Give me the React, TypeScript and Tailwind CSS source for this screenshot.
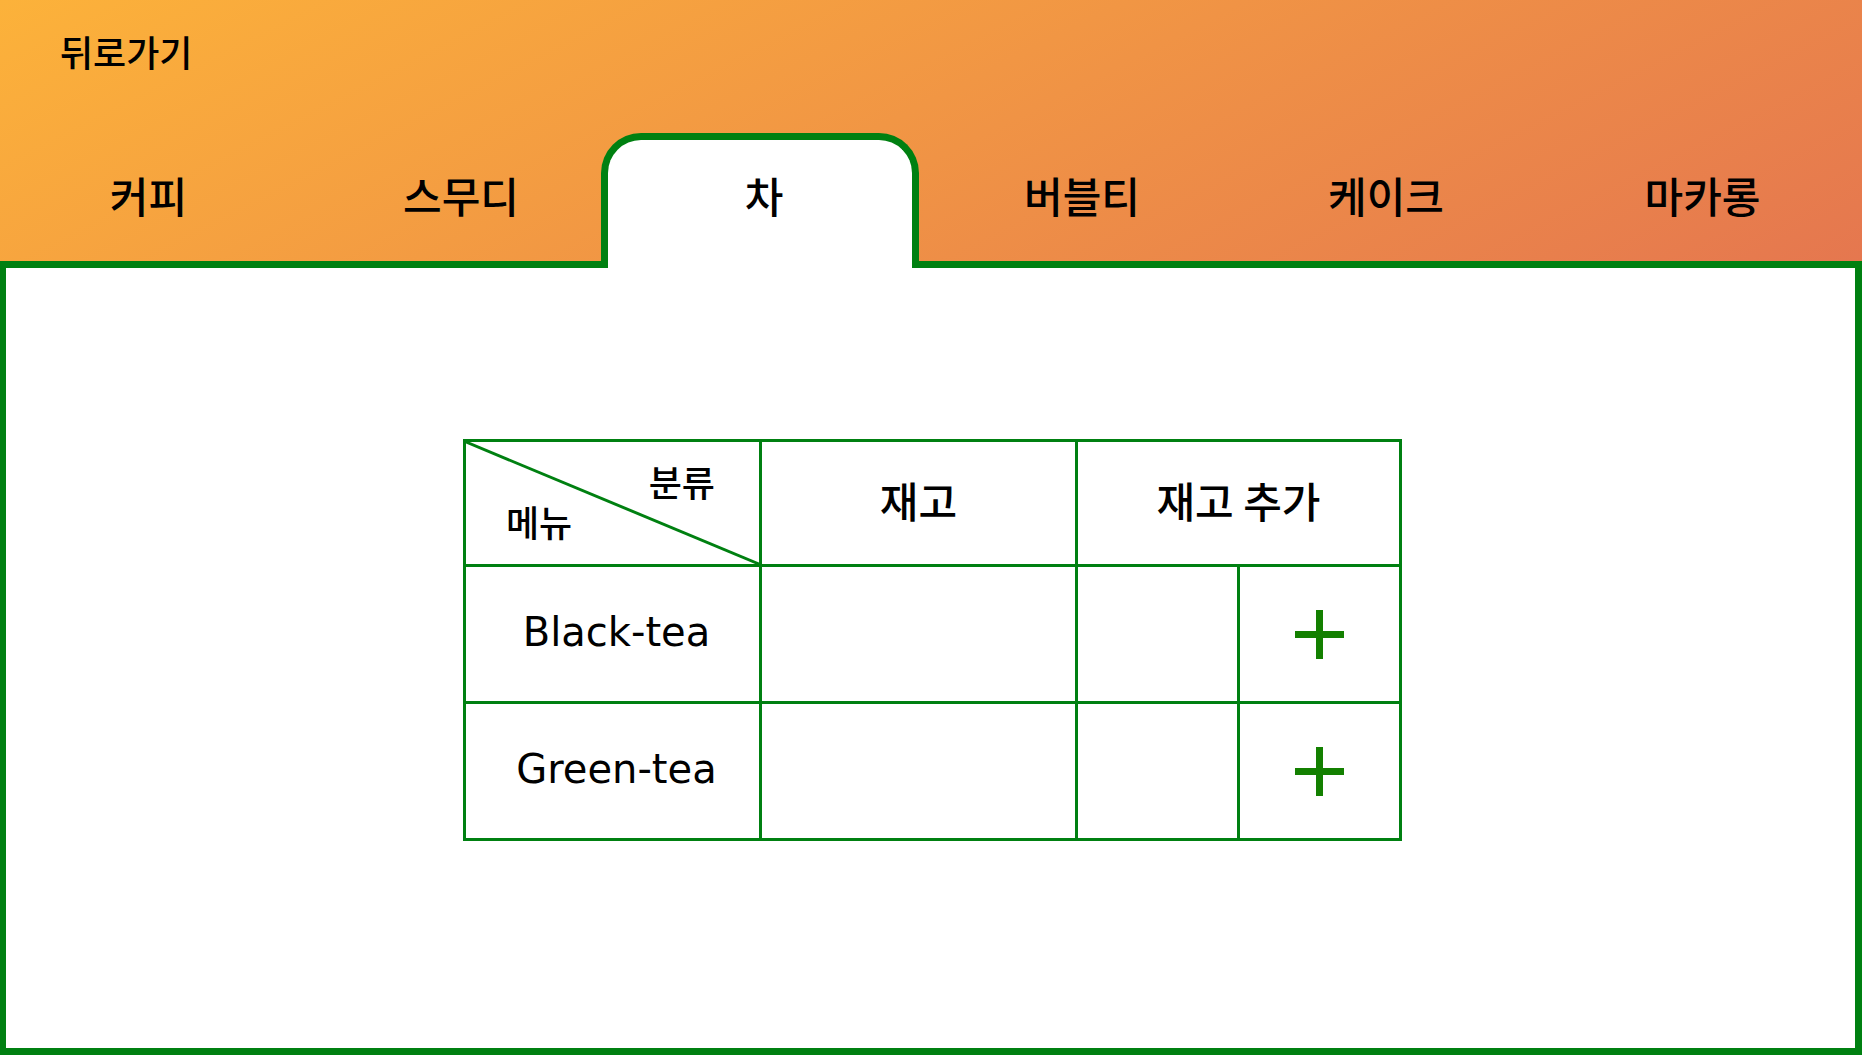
import React from "react";

const tabs = [
  { label: "커피", pad: "" },
  { label: "스무디", pad: "pl-6" },
  { label: "차", pad: "pl-2" },
  { label: "버블티", pad: "" },
  { label: "케이크", pad: "" },
  { label: "마카롱", pad: "pl-4" },
];

const teas = ["Black-tea", "Green-tea"];

function PlusIcon() {
  return (
    <svg width="49" height="49" viewBox="0 0 49 49" aria-hidden="true">
      <path d="M0 24.5H49M24.5 0V49" stroke="#138000" strokeWidth="7" fill="none" />
    </svg>
  );
}

export default function App() {
  return (
    <div className="flex min-h-screen flex-col bg-white font-['Noto_Sans_CJK_KR',sans-serif] font-medium text-black">
      <header className="flex flex-col bg-[linear-gradient(153deg,#fcb23a_0%,#e5774f_100%)]">
        <div className="flex h-[133px] items-start pt-[27px] pl-[60px]">
          <button type="button" className="text-[36px] leading-[48px]">
            뒤로가기
          </button>
        </div>
        <nav
          aria-label="메뉴"
          className="grid h-32 grid-cols-[297fr_304fr_318fr_326fr_282fr_335fr]"
        >
          {tabs.map((tab) =>
            tab.label === "차" ? (
              <button
                key={tab.label}
                type="button"
                aria-current="page"
                className={`relative z-10 -mb-[7px] flex justify-center rounded-t-[40px] border-x-[7px] border-t-[7px] border-[#008011] bg-white pt-[25px] text-[42px] leading-[60px] ${tab.pad}`}
              >
                {tab.label}
              </button>
            ) : (
              <button
                key={tab.label}
                type="button"
                className={`flex justify-center pt-8 text-[42px] leading-[60px] ${tab.pad}`}
              >
                {tab.label}
              </button>
            ),
          )}
        </nav>
      </header>

      <main className="flex flex-1 flex-col items-center border-7 border-l-6 border-[#008011] pt-[171px] pl-1">
        <table className="w-[939px] table-fixed border-collapse">
          <colgroup>
            <col className="w-[296px]" />
            <col className="w-[316px]" />
            <col className="w-[162px]" />
            <col className="w-[162px]" />
          </colgroup>
          <thead>
            <tr className="h-[125px]">
              <th className="relative border-3 border-[#008011] p-0 font-medium">
                <svg
                  className="absolute inset-0 h-full w-full"
                  viewBox="0 0 296 125"
                  preserveAspectRatio="none"
                  aria-hidden="true"
                >
                  <path d="M0 0L296 125" stroke="#008011" strokeWidth="3" />
                </svg>
                <div className="flex flex-col pr-11 pb-1 pl-10 text-[36px] leading-10">
                  <span className="self-end">분류</span>
                  <span className="self-start">메뉴</span>
                </div>
              </th>
              <th className="border-3 border-[#008011] p-0 pb-2 text-[42px] font-medium">재고</th>
              <th
                colSpan={2}
                className="border-3 border-[#008011] p-0 pb-2 text-[42px] font-medium"
              >
                재고 추가
              </th>
            </tr>
          </thead>
          <tbody>
            {teas.map((tea) => (
              <tr key={tea} className="h-[137px]">
                <th className="border-3 border-[#008011] p-0 pb-1 pl-2 font-['DejaVu_Sans',sans-serif] text-[40px] font-normal">
                  {tea}
                </th>
                <td className="border-3 border-[#008011] p-0" />
                <td className="border-3 border-[#008011] p-0">
                  <input
                    type="text"
                    aria-label={`${tea} 재고 추가`}
                    className="block h-16 w-full px-4 text-center text-[40px] outline-none"
                  />
                </td>
                <td className="border-3 border-[#008011] p-0">
                  <button
                    type="button"
                    aria-label={`${tea} 추가`}
                    className="flex w-full items-center justify-center"
                  >
                    <PlusIcon />
                  </button>
                </td>
              </tr>
            ))}
          </tbody>
        </table>
      </main>
    </div>
  );
}
